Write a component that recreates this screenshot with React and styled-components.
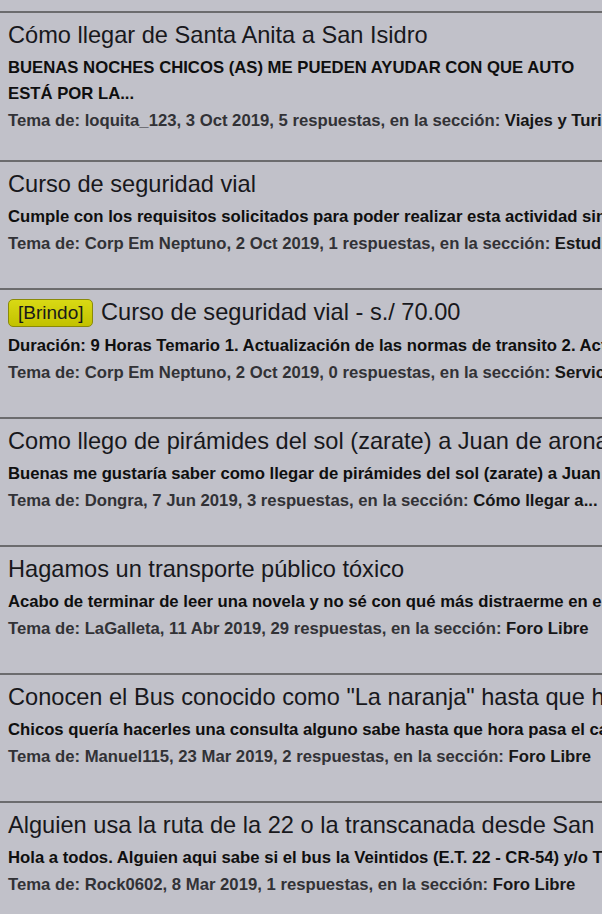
import React from "react";
import styled, { createGlobalStyle } from "styled-components";

const Global = createGlobalStyle`
  html, body {
    margin: 0;
    padding: 0;
    background: #c1c1c9;
    overflow: hidden;
  }
  body {
    font-family: "Liberation Sans", Arial, sans-serif;
  }
`;

const List = styled.div`
  padding-top: 11px;
  display: flex;
  flex-direction: column;
`;

const Item = styled.article`
  border-top: 2px solid #6c6c6e;
  padding: 8px 8px ${(p) => (p.$tight ? "26px" : "31px")};
  display: flex;
  flex-direction: column;
  overflow: hidden;
`;

const Title = styled.h3`
  margin: 0;
  font-size: 23.6px;
  line-height: 28px;
  font-weight: normal;
  color: #18181c;
  white-space: nowrap;
`;

const Badge = styled.span`
  display: inline-block;
  font-size: 19px;
  line-height: 26px;
  padding: 0 9px;
  margin-right: 1px;
  border: 1px solid #8a8a08;
  border-radius: 5px;
  background: linear-gradient(#d9d914, #c2c200);
  color: #1a1a1a;
  vertical-align: 1px;
`;

const Excerpt = styled.p`
  margin: 6px 0 0;
  font-size: 16.7px;
  line-height: 26px;
  font-weight: bold;
  color: #0f0f0f;
  white-space: nowrap;
`;

const Meta = styled.div`
  margin-top: 1px;
  font-size: 16.7px;
  line-height: 26px;
  font-weight: bold;
  color: #323236;
  white-space: nowrap;
`;

const Section = styled.span`
  color: #161616;
`;

const threads = [
  {
    title: "Cómo llegar de Santa Anita a San Isidro",
    excerpt: [
      "BUENAS NOCHES CHICOS (AS) ME PUEDEN AYUDAR CON QUE AUTO",
      "ESTÁ POR LA...",
    ],
    meta: "Tema de: loquita_123, 3 Oct 2019, 5 respuestas, en la sección: ",
    section: "Viajes y Turismo",
  },
  {
    title: "Curso de seguridad vial",
    excerpt: [
      "Cumple con los requisitos solicitados para poder realizar esta actividad sin inconvenientes...",
    ],
    meta: "Tema de: Corp Em Neptuno, 2 Oct 2019, 1 respuestas, en la sección: ",
    section: "Estudios y Cursos",
  },
  {
    badge: "[Brindo]",
    title: "Curso de seguridad vial - s./ 70.00",
    excerpt: [
      "Duración: 9 Horas Temario 1. Actualización de las normas de transito 2. Actualización...",
    ],
    meta: "Tema de: Corp Em Neptuno, 2 Oct 2019, 0 respuestas, en la sección: ",
    section: "Servicios",
  },
  {
    title: "Como llego de pirámides del sol (zarate) a Juan de arona",
    excerpt: [
      "Buenas me gustaría saber como llegar de pirámides del sol (zarate) a Juan de arona...",
    ],
    meta: "Tema de: Dongra, 7 Jun 2019, 3 respuestas, en la sección: ",
    section: "Cómo llegar a...",
  },
  {
    title: "Hagamos un transporte público tóxico",
    excerpt: [
      "Acabo de terminar de leer una novela y no sé con qué más distraerme en el bus...",
    ],
    meta: "Tema de: LaGalleta, 11 Abr 2019, 29 respuestas, en la sección: ",
    section: "Foro Libre",
  },
  {
    title: "Conocen el Bus conocido como \"La naranja\" hasta que hora pasa",
    excerpt: [
      "Chicos quería hacerles una consulta alguno sabe hasta que hora pasa el carro...",
    ],
    meta: "Tema de: Manuel115, 23 Mar 2019, 2 respuestas, en la sección: ",
    section: "Foro Libre",
  },
  {
    title: "Alguien usa la ruta de la 22 o la transcanada desde San Isidro",
    excerpt: [
      "Hola a todos. Alguien aqui sabe si el bus la Veintidos (E.T. 22 - CR-54) y/o Transcanada...",
    ],
    meta: "Tema de: Rock0602, 8 Mar 2019, 1 respuestas, en la sección: ",
    section: "Foro Libre",
  },
];

export default function App() {
  return (
    <>
      <Global />
      <List>
        {threads.map((t, i) => (
          <Item key={i} $tight={t.excerpt.length > 1}>
            <Title>
              {t.badge && (
                <>
                  <Badge>{t.badge}</Badge>{" "}
                </>
              )}
              {t.title}
            </Title>
            <Excerpt>
              {t.excerpt.map((line, j) => (
                <React.Fragment key={j}>
                  {j > 0 && <br />}
                  {line}
                </React.Fragment>
              ))}
            </Excerpt>
            <Meta>
              {t.meta}
              <Section>{t.section}</Section>
            </Meta>
          </Item>
        ))}
      </List>
    </>
  );
}
